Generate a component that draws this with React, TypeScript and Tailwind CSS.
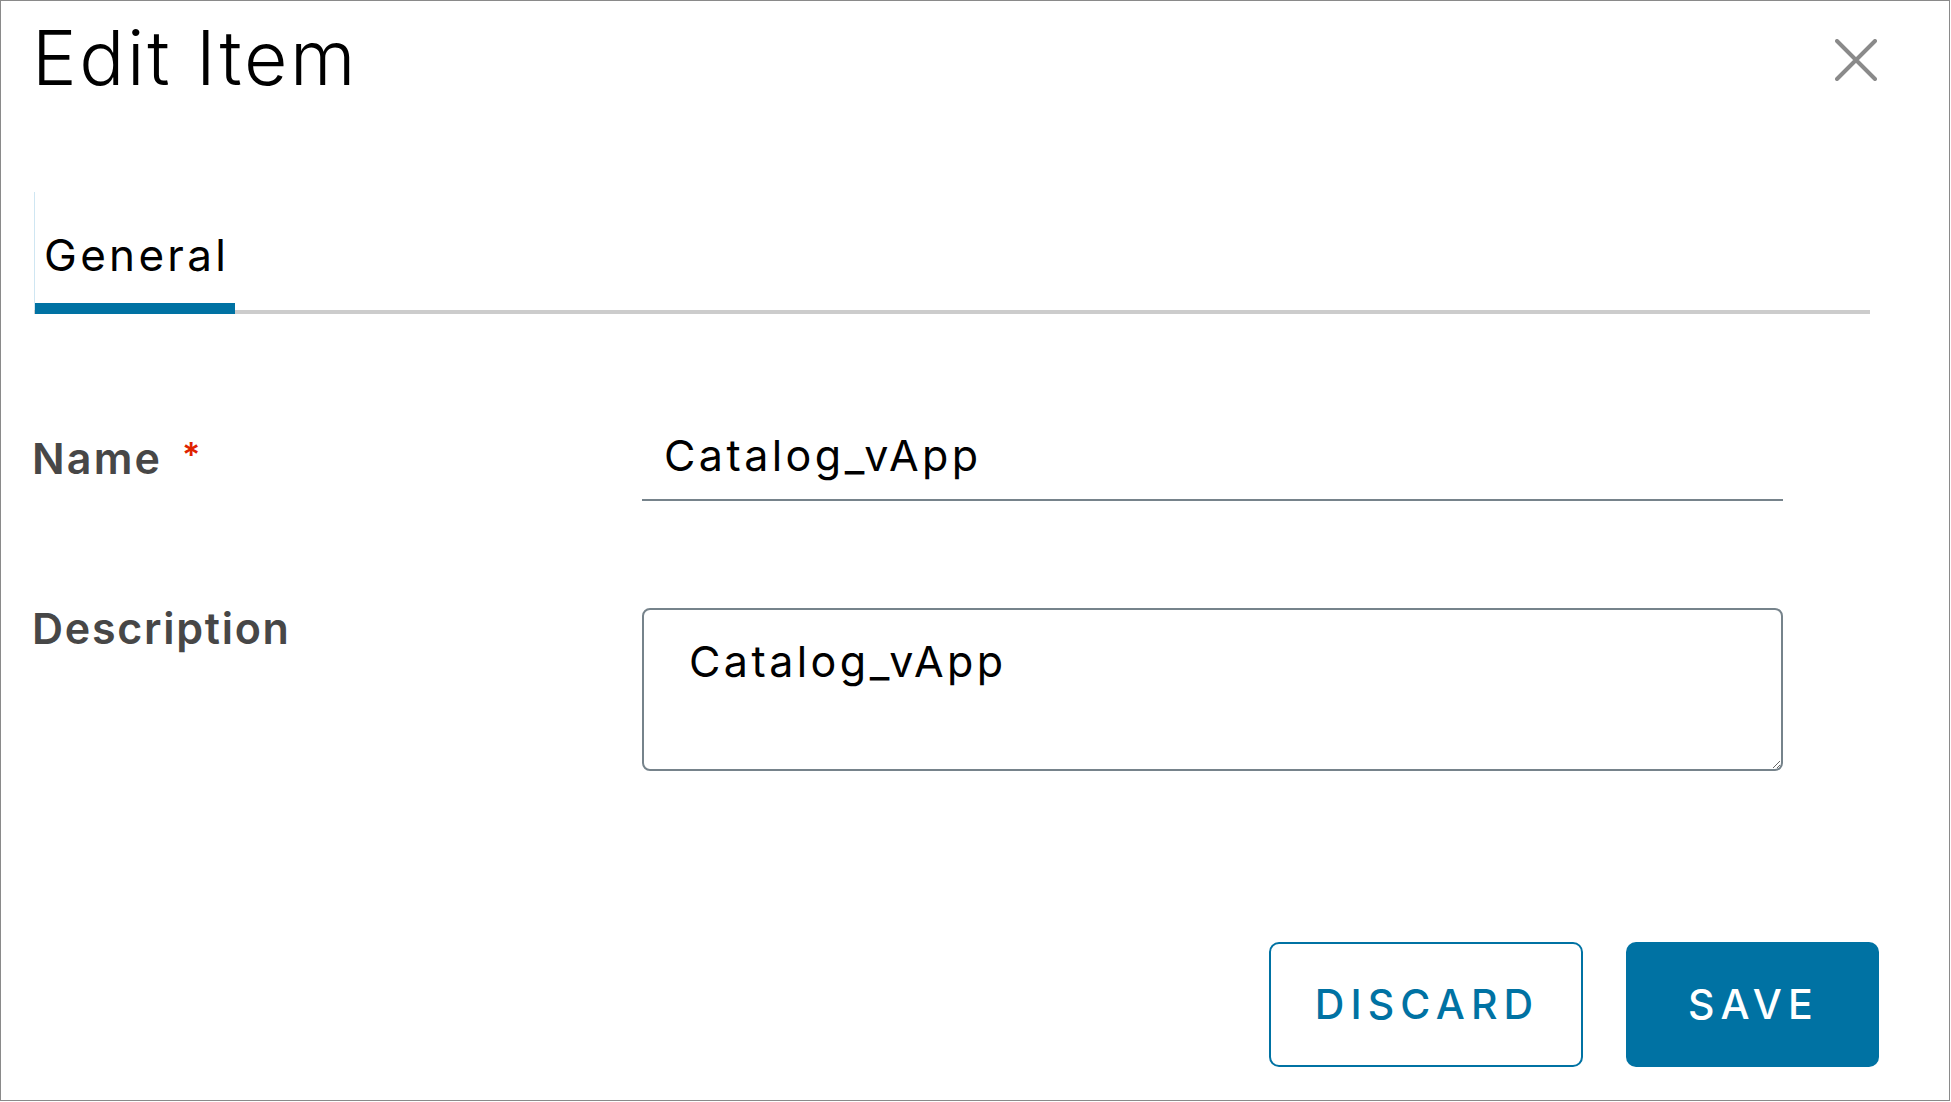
import { useState } from "react";

const CloseIcon: React.FC = () => (
  <svg width="42" height="42" viewBox="0 0 42 42" fill="none">
    <path d="M2 2L40 40M40 2L2 40" stroke="#8a8a8a" strokeWidth="4" strokeLinecap="round" />
  </svg>
);

const App: React.FC = () => {
  const [name, setName] = useState<string>("Catalog_vApp");
  const [description, setDescription] = useState<string>("Catalog_vApp");

  return (
    <div className="w-[1950px] h-[1101px] border border-[#8a8a8a] bg-white font-['Inter',sans-serif] text-black flex flex-col">
      {/* header */}
      <div className="flex items-start justify-between pl-[31px] pr-[72px]">
        <h1 className="mt-[20px] text-[75px] leading-[74px] font-light tracking-[0.035em]">Edit Item</h1>
        <button className="mt-[38px]">
          <CloseIcon />
        </button>
      </div>

      {/* tabs */}
      <div className="mt-[97px] ml-[33px] mr-[79px] flex border-b-4 border-[#cccccc]">
        <div className="relative h-[118px] border-l border-[#cfe6f2] pl-[9px] pr-[6px] pt-[38px]">
          <span className="text-[44px] leading-[50px] tracking-[0.075em]">General</span>
          <div className="absolute left-0 right-0 bottom-[-4px] h-[11px] bg-[#0072a3]" />
        </div>
      </div>

      {/* form */}
      <div className="mt-[119px] pl-[31px] grid grid-cols-[610px_1141px] gap-y-[107px]">
        <div className="flex items-center h-[50px] text-[43px] font-semibold text-[#474747] tracking-[0.05em]">
          Name
          <span className="ml-[20px] text-[34px] text-[#e02200] self-start mt-[-4px]">*</span>
        </div>
        <input
          value={name}
          onChange={(e) => setName(e.target.value)}
          className="box-border h-[68px] pl-[22px] pb-[22px] border-b-2 border-[#76838b] text-[43px] leading-[46px] tracking-[0.08em] outline-none"
        />

        <div className="h-[40px] leading-[40px] text-[43px] font-semibold text-[#474747] tracking-[0.04em]">
          Description
        </div>
        <textarea
          value={description}
          onChange={(e) => setDescription(e.target.value)}
          className="box-border h-[163px] border-2 border-[#76838b] rounded-[8px] pl-[45px] pt-[26px] text-[43px] leading-[50px] tracking-[0.08em] outline-none"
        />
      </div>

      {/* footer */}
      <div className="mt-auto mb-[33px] flex justify-end gap-[43px] pr-[70px]">
        <button className="w-[314px] h-[125px] rounded-[10px] border-2 border-[#0072a3] text-[#0072a3] text-[41px] font-medium tracking-[0.15em] pl-[2px]">
          DISCARD
        </button>
        <button className="w-[253px] h-[125px] rounded-[10px] bg-[#0072a3] text-white text-[41px] font-medium tracking-[0.15em] pl-[2px]">
          SAVE
        </button>
      </div>
    </div>
  );
};

export default App;
